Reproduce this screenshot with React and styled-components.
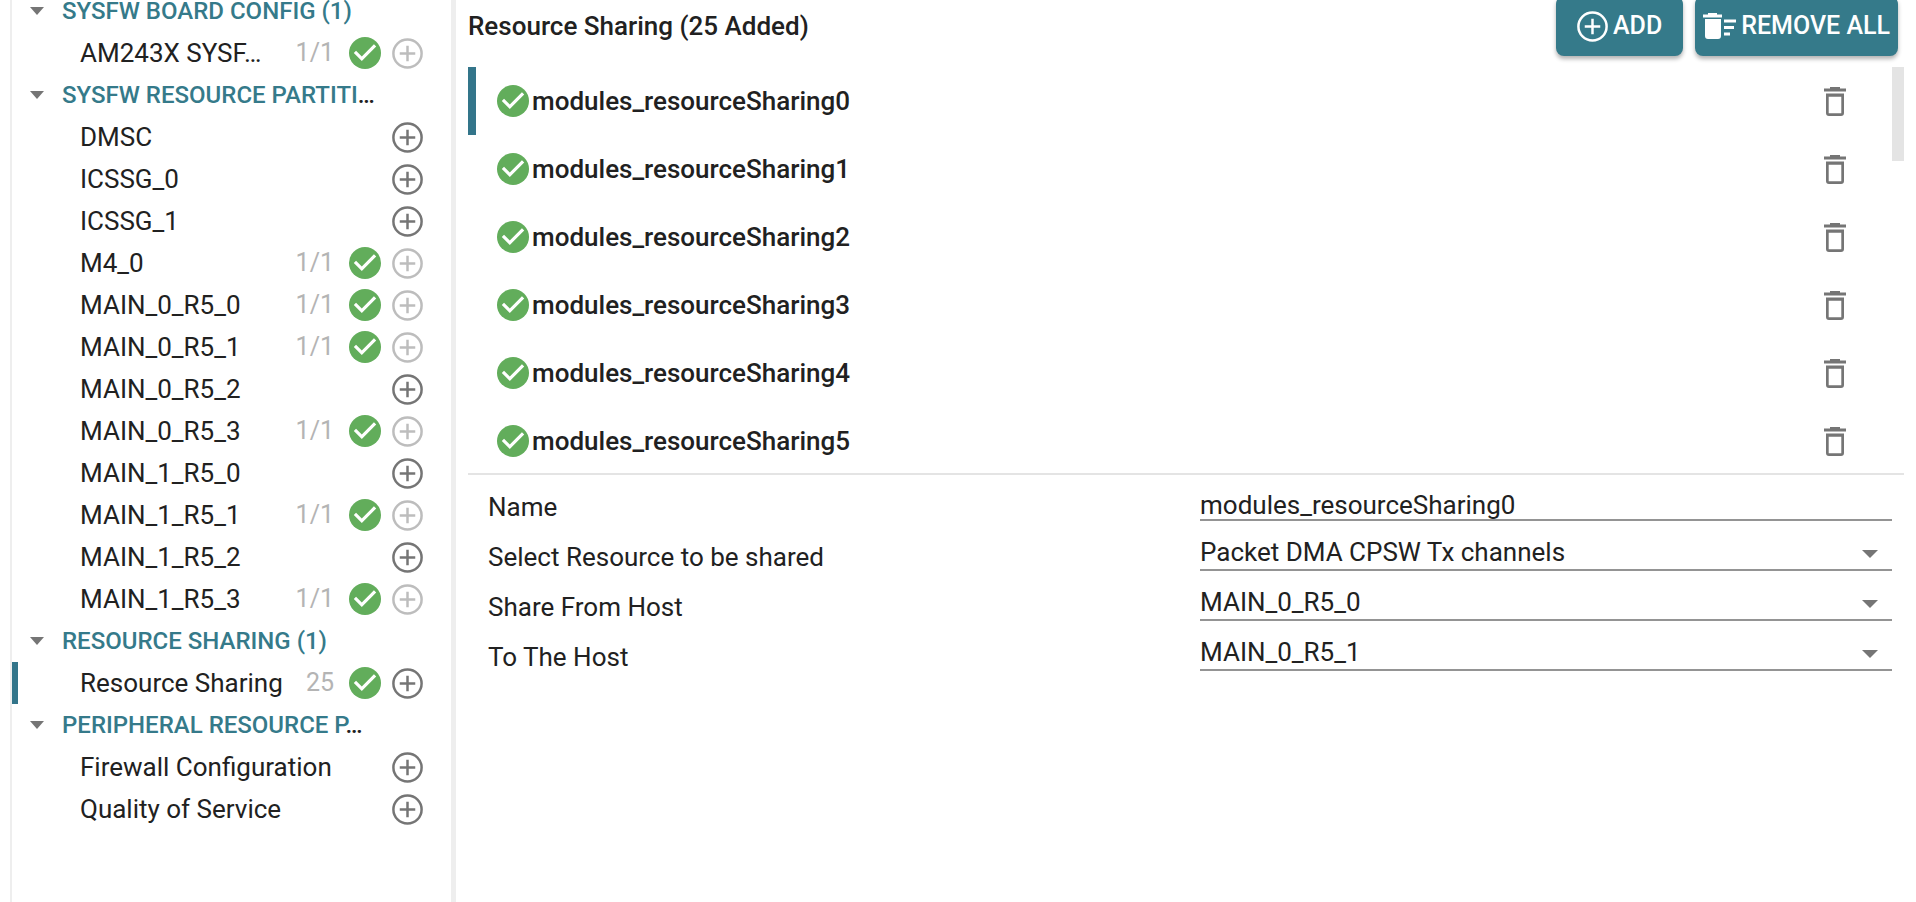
import React from "react";
import styled, { createGlobalStyle, css } from "styled-components";

const TEAL = "#357a8a";
const BAR = "#33758a";
const INK = "#212121";

const GlobalStyle = createGlobalStyle`
  *, *::before, *::after { box-sizing: border-box; }
  body {
    margin: 0;
    background: #fff;
    color: ${INK};
    font-family: Roboto, "Liberation Sans", sans-serif;
    font-size: 26px;
    line-height: 42px;
  }
  button, input, select { font: inherit; color: inherit; }
`;

const Page = styled.div`
  display: flex;
  height: 100vh;
  overflow: hidden;
  padding-left: 10px;
`;

const Sidebar = styled.nav`
  flex: 0 0 441px;
  border-left: 2px solid #eee;
  overflow: hidden;
`;

const Splitter = styled.div`
  flex: 0 0 5px;
  background: #eee;
`;

const Tree = styled.ul`
  list-style: none;
  margin: -10px 0 0 -2px;
  padding: 0;
`;

const GroupRow = styled.li`
  display: flex;
  align-items: center;
  height: 42px;
  padding: 0 60px 0 20px;
`;

const Caret = styled.svg`
  flex: none;
  width: 14px;
  height: 8px;
  fill: #757575;
`;

const GroupTitle = styled.div`
  flex: 1;
  min-width: 0;
  margin-left: 18px;
  white-space: nowrap;
  font-size: 24px;
  font-weight: 500;
  span { color: ${TEAL}; }
`;

const ItemRow = styled.li`
  display: flex;
  align-items: center;
  height: 42px;
  padding: 0 28px 0 62px;
  border-left: 8px solid ${(p) => (p.$selected ? BAR : "transparent")};
`;

const ItemName = styled.span`
  flex: 1;
  min-width: 0;
  white-space: nowrap;
`;

const Count = styled.span`
  flex: none;
  padding: 0 15px 0 16px;
  color: #b4b4b4;
  font-size: 25px;
`;

const IconButton = styled.button`
  flex: none;
  display: flex;
  margin-left: 11px;
  padding: 0;
  border: 0;
  background: none;
  color: #757575;
  &:disabled { color: #bdbdbd; }
`;

const Main = styled.main`
  flex: 1;
  min-width: 0;
  padding: 0 12px;
`;

const Header = styled.header`
  display: flex;
  align-items: center;
  gap: 12px;
  height: 60px;
  margin: -4px 0 11px;
  padding-right: 6px;
`;

const Title = styled.h1`
  flex: 1;
  margin: 0;
  font-size: 26px;
  font-weight: 500;
`;

const ActionButton = styled.button`
  display: flex;
  align-items: center;
  justify-content: center;
  height: 60px;
  padding: 0 ${(p) => (p.$wide ? 8 : 21)}px;
  gap: 5px;
  border: 0;
  border-radius: 8px;
  background: ${TEAL};
  color: #fff;
  font-size: 25px;
  font-weight: 500;
  white-space: nowrap;
  box-shadow: 0 3px 4px rgba(0, 0, 0, 0.3);
`;

const Instances = styled.section`
  display: flex;
  border-bottom: 2px solid #e4e4e4;
`;

const InstanceList = styled.ul`
  flex: 1;
  list-style: none;
  margin: 0;
  padding: 0;
`;

const InstanceRow = styled.li`
  display: flex;
  align-items: center;
  gap: 3px;
  height: 68px;
  padding: 0 46px 0 21px;
  border-left: 8px solid ${(p) => (p.$selected ? BAR : "transparent")};
  font-weight: 500;
  &:last-child { height: 66px; padding-top: 2px; }
`;

const InstanceName = styled.span`
  flex: 1;
`;

const ScrollTrack = styled.div`
  flex: 0 0 12px;
`;

const ScrollThumb = styled.div`
  height: 94px;
  background: #e4e4e4;
`;

const Form = styled.form`
  padding: 0 12px 0 20px;
`;

const Field = styled.div`
  display: grid;
  grid-template-columns: 1fr 1fr;
  gap: 20px;
  height: 50px;
`;

const Label = styled.label`
  padding-top: 11px;
`;

const line = css`
  width: 100%;
  border: 0;
  border-bottom: 2px solid #949494;
  border-radius: 0;
  background: none;
  outline: 0;
`;

const TextInput = styled.input`
  ${line}
  height: 36px;
  margin-top: 10px;
  padding: 6px 0 0;
  line-height: 28px;
`;

const SelectWrap = styled.div`
  position: relative;
`;

const Select = styled.select`
  ${line}
  appearance: none;
  height: 42px;
  margin-top: 4px;
  padding: 6px 40px 0 0;
  line-height: 34px;
`;

const SelectCaret = styled(Caret)`
  position: absolute;
  right: 14px;
  top: 25px;
  width: 16px;
  pointer-events: none;
`;

const Down = ({ as: C = Caret }) => (
  <C viewBox="0 0 10 5" preserveAspectRatio="none" aria-hidden="true">
    <path d="M0 0h10L5 5z" />
  </C>
);

const Check = () => (
  <svg width="32" height="32" viewBox="2 2 20 20" aria-hidden="true">
    <circle cx="12" cy="12" r="10" fill="#62ad5b" />
    <path d="M10 17l-5-5 1.410-1.410L10 14.170l7.590-7.590L19 8z" fill="#fff" />
  </svg>
);

const Plus = () => (
  <svg width="31" height="31" viewBox="2 2 20 20" aria-hidden="true" fill="none" stroke="currentColor" strokeWidth="1.6">
    <circle cx="12" cy="12" r="9.1" />
    <path d="M12 7v10M7 12h10" />
  </svg>
);

const Trash = () => (
  <svg width="22" height="29" viewBox="0 0 22 29" aria-hidden="true" fill="currentColor">
    <path d="M6 0h10v1.500h6v3H0v-3h6z" />
    <path d="M2 6.500h18V26a3 3 0 0 1-3 3H5a3 3 0 0 1-3-3zM4.700 9.700v16.500h12.600V9.700z" fillRule="evenodd" />
  </svg>
);

const Sweep = () => (
  <svg width="33" height="26" viewBox="0 0 33 26" aria-hidden="true" fill="currentColor">
    <path d="M5 0h9v1.500h5v3H0v-3h5zM2 6h16v17a3 3 0 0 1-3 3H5a3 3 0 0 1-3-3zM21 6.500h12v3H21zM21 13h10v3H21zM21 19.500h6v3h-6z" />
  </svg>
);

const groups = [
  { title: "SYSFW BOARD CONFIG (1)", items: [{ name: "AM243X SYSF…", count: "1/1" }] },
  {
    title: "SYSFW RESOURCE PARTITI",
    shortened: true,
    items: [
      { name: "DMSC" },
      { name: "ICSSG_0" },
      { name: "ICSSG_1" },
      { name: "M4_0", count: "1/1" },
      { name: "MAIN_0_R5_0", count: "1/1" },
      { name: "MAIN_0_R5_1", count: "1/1" },
      { name: "MAIN_0_R5_2" },
      { name: "MAIN_0_R5_3", count: "1/1" },
      { name: "MAIN_1_R5_0" },
      { name: "MAIN_1_R5_1", count: "1/1" },
      { name: "MAIN_1_R5_2" },
      { name: "MAIN_1_R5_3", count: "1/1" },
    ],
  },
  { title: "RESOURCE SHARING (1)", items: [{ name: "Resource Sharing", count: "25", selected: true }] },
  {
    title: "PERIPHERAL RESOURCE P",
    shortened: true,
    items: [{ name: "Firewall Configuration" }, { name: "Quality of Service" }],
  },
];

const instances = [0, 1, 2, 3, 4, 5].map((n) => `modules_resourceSharing${n}`);

const selects = [
  { id: "resource", label: "Select Resource to be shared", value: "Packet DMA CPSW Tx channels" },
  { id: "from", label: "Share From Host", value: "MAIN_0_R5_0" },
  { id: "to", label: "To The Host", value: "MAIN_0_R5_1" },
];

export default function App() {
  return (
    <>
      <GlobalStyle />
      <Page>
        <Sidebar>
          <Tree>
            {groups.map((g) => (
              <React.Fragment key={g.title}>
                <GroupRow>
                  <Down />
                  <GroupTitle><span>{g.title}</span>{g.shortened && "…"}</GroupTitle>
                </GroupRow>
                {g.items.map((item) => (
                  <ItemRow key={item.name} $selected={item.selected}>
                    <ItemName>{item.name}</ItemName>
                    {item.count && <Count>{item.count}</Count>}
                    {item.count && <Check />}
                    <IconButton type="button" aria-label={`Add ${item.name}`} disabled={item.count === "1/1"}>
                      <Plus />
                    </IconButton>
                  </ItemRow>
                ))}
              </React.Fragment>
            ))}
          </Tree>
        </Sidebar>
        <Splitter />
        <Main>
          <Header>
            <Title>Resource Sharing (25 Added)</Title>
            <ActionButton type="button"><Plus />ADD</ActionButton>
            <ActionButton type="button" $wide><Sweep />REMOVE ALL</ActionButton>
          </Header>
          <Instances>
            <InstanceList>
              {instances.map((name, i) => (
                <InstanceRow key={name} $selected={i === 0}>
                  <Check />
                  <InstanceName>{name}</InstanceName>
                  <IconButton type="button" aria-label={`Remove ${name}`}><Trash /></IconButton>
                </InstanceRow>
              ))}
            </InstanceList>
            <ScrollTrack><ScrollThumb /></ScrollTrack>
          </Instances>
          <Form>
            <Field>
              <Label htmlFor="name">Name</Label>
              <div><TextInput id="name" defaultValue="modules_resourceSharing0" /></div>
            </Field>
            {selects.map((s) => (
              <Field key={s.id}>
                <Label htmlFor={s.id}>{s.label}</Label>
                <SelectWrap>
                  <Select id={s.id} defaultValue={s.value}><option>{s.value}</option></Select>
                  <Down as={SelectCaret} />
                </SelectWrap>
              </Field>
            ))}
          </Form>
        </Main>
      </Page>
    </>
  );
}
